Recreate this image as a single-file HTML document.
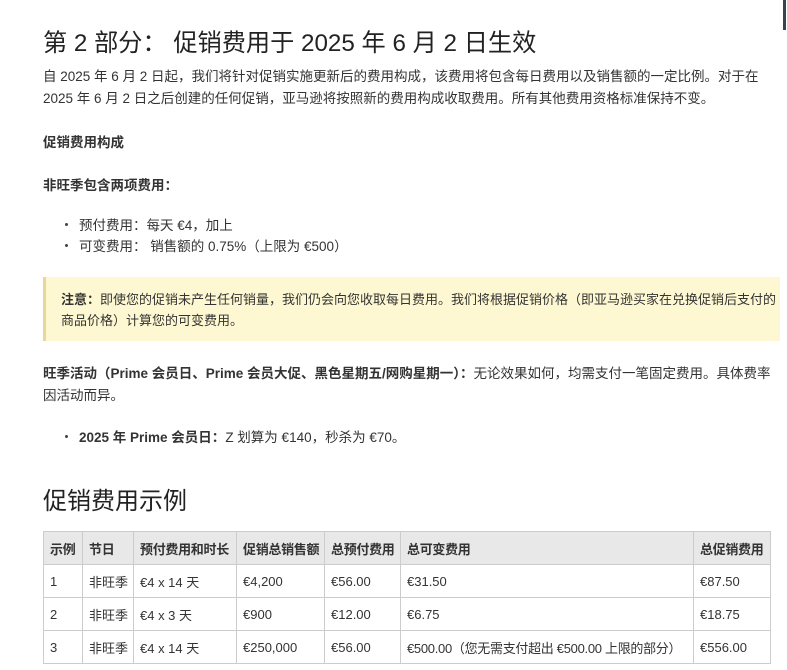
<!DOCTYPE html>
<html><head><meta charset="utf-8"><style>
body{margin:0;background:#fff;width:787px;height:670px;overflow:hidden;position:relative;font-family:"Liberation Sans","Noto Sans CJK SC",sans-serif;color:#333;font-size:13.5px}
.a{position:absolute;left:43px;white-space:nowrap}
h1{font-weight:normal;font-size:24.2px;margin:0;color:#222}
h2{font-weight:normal;font-size:24px;margin:0;color:#222}
b{font-weight:bold}
.note{position:absolute;left:43px;top:277px;width:737px;height:64px;background:#fef8d2;border-left:3px solid #e8d796;box-sizing:border-box}
table{position:absolute;left:43px;top:531px;border-collapse:collapse;font-size:13px;table-layout:fixed;width:727px}
td,th{border:1px solid #ccc;padding:0 0 0 6px;height:32px;text-align:left;white-space:nowrap;overflow:hidden}
th{background:#e8e8e8;font-weight:bold;letter-spacing:-0.3px}
.dot{position:absolute;left:65px;width:3px;height:3px;border-radius:2px;background:#444}
</style></head><body>
<div style="position:absolute;left:783px;top:0;width:3px;height:30px;background:#3a4450"></div>
<div class="a" style="top:23px"><h1>第 2 部分：&nbsp;促销费用于 2025 年 6 月 2 日生效</h1></div>
<div class="a" style="top:66px;line-height:22px">自 2025 年 6 月 2 日起，我们将针对促销实施更新后的费用构成，该费用将包含每日费用以及销售额的一定比例。对于在<br>2025 年 6 月 2 日之后创建的任何促销，亚马逊将按照新的费用构成收取费用。所有其他费用资格标准保持不变。</div>
<div class="a" style="top:131px"><b>促销费用构成</b></div>
<div class="a" style="top:174px"><b>非旺季包含两项费用：</b></div>
<div class="dot" style="top:223px"></div><div class="a" style="left:79px;top:214px">预付费用：每天 €4，加上</div>
<div class="dot" style="top:244px"></div><div class="a" style="left:79px;top:235px">可变费用： 销售额的 0.75%（上限为 €500）</div>
<div class="note"></div>
<div class="a" style="left:61px;top:289px;line-height:21px;font-size:13px"><b>注意：</b>即使您的促销未产生任何销量，我们仍会向您收取每日费用。我们将根据促销价格（即亚马逊买家在兑换促销后支付的<br>商品价格）计算您的可变费用。</div>
<div class="a" style="top:363px;line-height:22px"><b>旺季活动（Prime 会员日、Prime 会员大促、黑色星期五/网购星期一）：</b>无论效果如何，均需支付一笔固定费用。具体费率<br>因活动而异。</div>
<div class="dot" style="top:435px"></div><div class="a" style="left:79px;top:426px"><b>2025 年 Prime 会员日：</b>Z 划算为 €140，秒杀为 €70。</div>
<div class="a" style="top:481px"><h2>促销费用示例</h2></div>
<table>
<colgroup><col style="width:39px"><col style="width:51px"><col style="width:103px"><col style="width:88px"><col style="width:76px"><col style="width:293px"><col style="width:77px"></colgroup>
<tr><th>示例</th><th>节日</th><th>预付费用和时长</th><th>促销总销售额</th><th>总预付费用</th><th>总可变费用</th><th>总促销费用</th></tr>
<tr><td>1</td><td>非旺季</td><td>€4 x 14 天</td><td>€4,200</td><td>€56.00</td><td>€31.50</td><td>€87.50</td></tr>
<tr><td>2</td><td>非旺季</td><td>€4 x 3 天</td><td>€900</td><td>€12.00</td><td>€6.75</td><td>€18.75</td></tr>
<tr><td>3</td><td>非旺季</td><td>€4 x 14 天</td><td>€250,000</td><td>€56.00</td><td style="letter-spacing:-0.3px">€500.00（您无需支付超出 €500.00 上限的部分）</td><td>€556.00</td></tr>
</table>
</body></html>
